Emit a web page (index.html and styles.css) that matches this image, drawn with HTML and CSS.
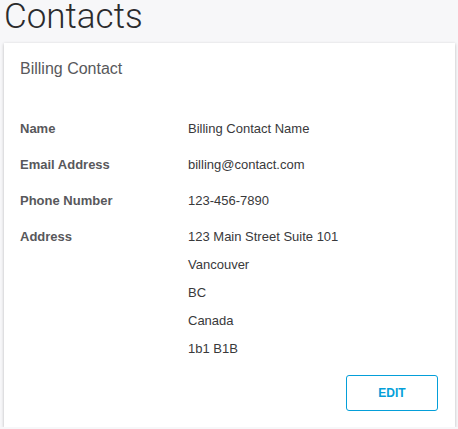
FILE: index.html
```html
<!DOCTYPE html>
<html lang="en">
<head>
    <meta charset="UTF-8">
    <meta name="viewport" content="width=device-width, initial-scale=1.0">
    <title>Contacts</title>
    <link rel="stylesheet" href="styles.css">
</head>
<body>
    <h1 class="page-title">Contacts</h1>

    <!-- Billing contact card -->
    <div class="card">
        <div class="card-title">Billing Contact</div>

        <div class="details">
            <div class="label">Name</div>
            <div class="value">Billing Contact Name</div>

            <div class="label">Email Address</div>
            <div class="value">billing@contact.com</div>

            <div class="label">Phone Number</div>
            <div class="value">123-456-7890</div>

            <div class="label">Address</div>
            <div class="value">
                <div>123 Main Street Suite 101</div>
                <div>Vancouver</div>
                <div>BC</div>
                <div>Canada</div>
                <div>1b1 B1B</div>
            </div>
        </div>

        <div class="card-actions">
            <button class="edit-btn">EDIT</button>
        </div>
    </div>
</body>
</html>
```

FILE: styles.css
```css
body {
    font-family: "Liberation Sans", Arial, sans-serif;
    background-color: #f7f7f9;
    margin: 0;
    padding: 0;
}
.page-title {
    font-family: Roboto, "Liberation Sans", sans-serif;
    font-weight: 300;
    font-size: 35px;
    line-height: 34px;
    color: #2b2b2d;
    margin: 0 0 9px 4px;
}
.card {
    width: 451px;
    margin-left: 4px;
    box-sizing: border-box;
    padding: 16px 17px 16px 16px;
    background-color: #fff;
    box-shadow: 0 1px 3px rgba(0, 0, 0, 0.25);
}
.card-title {
    font-size: 16px;
    line-height: 20px;
    color: #58585b;
    margin-bottom: 32px;
}
.details {
    display: grid;
    grid-template-columns: 168px 1fr;
    font-size: 13px;
    line-height: 28px;
}
.label,
.value {
    padding: 4px 0;
}
.label {
    font-weight: bold;
    color: #58585b;
}
.value {
    color: #39393b;
}
.card-actions {
    display: flex;
    justify-content: flex-end;
    margin-top: 8px;
}
.edit-btn {
    width: 92px;
    height: 36px;
    background-color: #fff;
    border: 1px solid #049fd9;
    border-radius: 3px;
    color: #049fd9;
    font-family: "Liberation Sans", Arial, sans-serif;
    font-weight: bold;
    font-size: 12px;
    cursor: pointer;
}
```
